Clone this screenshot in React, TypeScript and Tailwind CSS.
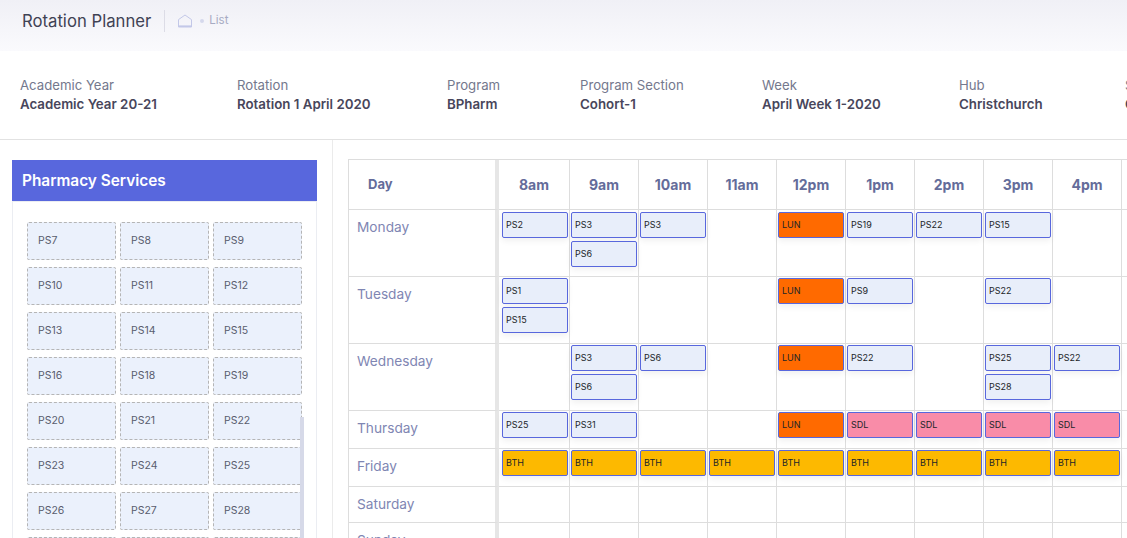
// Rotation Planner: list view with the service palette and weekly grid
import React from 'react';

type Kind = 'ps' | 'lun' | 'sdl' | 'bth';

interface Slot {
  label: string;
  kind: Kind;
}

const FILTERS = [
  { label: 'Academic Year', value: 'Academic Year 20-21', width: 'w-[217px]' },
  { label: 'Rotation', value: 'Rotation 1 April 2020', width: 'w-[210px]' },
  { label: 'Program', value: 'BPharm', width: 'w-[133px]' },
  { label: 'Program Section', value: 'Cohort-1', width: 'w-[182px]' },
  { label: 'Week', value: 'April Week 1-2020', width: 'w-[197px]' },
  { label: 'Hub', value: 'Christchurch', width: 'w-[166px]' },
  { label: 'Site', value: 'Christchurch', width: 'w-[120px]' },
];

const PALETTE = [
  'PS7', 'PS8', 'PS9', 'PS10', 'PS11', 'PS12', 'PS13', 'PS14', 'PS15', 'PS16', 'PS18', 'PS19',
  'PS20', 'PS21', 'PS22', 'PS23', 'PS24', 'PS25', 'PS26', 'PS27', 'PS28', 'PS29', 'PS30', 'PS31',
];

const HOURS = ['8am', '9am', '10am', '11am', '12pm', '1pm', '2pm', '3pm', '4pm'];

const ps = (...names: string[]): Slot[] => names.map(label => ({ label, kind: 'ps' }));
const lun: Slot[] = [{ label: 'LUN', kind: 'lun' }];
const sdl: Slot[] = [{ label: 'SDL', kind: 'sdl' }];
const bth: Slot[] = [{ label: 'BTH', kind: 'bth' }];

const ROWS: { day: string; height: string; cells: Slot[][] }[] = [
  {
    day: 'Monday',
    height: 'h-[67px]',
    cells: [ps('PS2'), ps('PS3', 'PS6'), ps('PS3'), [], lun, ps('PS19'), ps('PS22'), ps('PS15'), []],
  },
  {
    day: 'Tuesday',
    height: 'h-[67px]',
    cells: [ps('PS1', 'PS15'), [], [], [], lun, ps('PS9'), [], ps('PS22'), []],
  },
  {
    day: 'Wednesday',
    height: 'h-[67px]',
    cells: [[], ps('PS3', 'PS6'), ps('PS6'), [], lun, ps('PS22'), [], ps('PS25', 'PS28'), ps('PS22')],
  },
  {
    day: 'Thursday',
    height: 'h-[38px]',
    cells: [ps('PS25'), ps('PS31'), [], [], lun, sdl, sdl, sdl, sdl],
  },
  {
    day: 'Friday',
    height: 'h-[38px]',
    cells: [bth, bth, bth, bth, bth, bth, bth, bth, bth],
  },
  { day: 'Saturday', height: 'h-[36px]', cells: [[], [], [], [], [], [], [], [], []] },
  { day: 'Sunday', height: 'h-[38px]', cells: [[], [], [], [], [], [], [], [], []] },
];

const KIND_CLASS: Record<Kind, string> = {
  ps: 'bg-[#e8eefa]',
  lun: 'bg-[#ff6a00]',
  sdl: 'bg-[#f98ca8]',
  bth: 'bg-[#fdb900]',
};

const HomeIcon = () => (
  <svg width="16" height="14" viewBox="0 0 16 14" fill="none" className="text-[#c3c8e8]" aria-hidden="true">
    <path d="M1.5 5.6 8 1l6.5 4.6V13h-13z" stroke="currentColor" strokeWidth="1" />
    <path d="M1 12.2h14" stroke="currentColor" strokeWidth="1.6" />
  </svg>
);

const App: React.FC = () => {
  return (
    <div className="w-[1127px] h-[538px] overflow-hidden bg-white font-['Inter','Liberation_Sans',sans-serif]">
      <header className="h-[51px] flex items-center pl-[22px] pb-[9px] bg-gradient-to-b from-[#f0f0f6] to-[#fafafd]">
        <h1 className="text-[16.7px] text-[#3f4254] pr-[13px] border-r border-[#dcdce6] leading-[22px]">Rotation Planner</h1>
        <span className="ml-[12px] flex items-center">
          <HomeIcon />
        </span>
        <span className="ml-[7px] w-[4px] h-[4px] rounded-full bg-[#d5d8ec]" />
        <span className="ml-[5px] text-[11.5px] text-[#a7abc3]">List</span>
      </header>

      <section className="h-[89px] flex pl-[20px] pt-[25px] border-b border-[#e2e2e2] overflow-hidden">
        {FILTERS.map(f => (
          <div key={f.label} className={`${f.width} shrink-0`}>
            <div className="text-[13.2px] leading-[19px] text-[#74788d]">{f.label}</div>
            <div className="text-[13.3px] leading-[19px] font-semibold text-[#48465b]">{f.value}</div>
          </div>
        ))}
      </section>

      <div className="flex">
        <aside className="w-[333px] shrink-0 h-[398px] pl-[12px] pr-[15px] pt-[20px] border-r border-[#ebebeb]">
          <div className="h-[41px] flex items-center pl-[10px] bg-[#5867dd] text-white text-[15.4px] font-semibold">
            Pharmacy Services
          </div>
          <div className="relative h-[400px] overflow-hidden border-x border-t border-[#ebedf2] pl-[14px] pt-[20px]">
            <div className="grid grid-cols-[89px_89px_89px] auto-rows-[38px] gap-x-[4px] gap-y-[7px]">
              {PALETTE.map(name => (
                <div
                  key={name}
                  className="flex items-center pl-[10px] bg-[#ebf1fc] border border-dashed border-[#b5b5b5] rounded-[2px] text-[10.5px] text-[#595d6e]"
                >
                  {name}
                </div>
              ))}
            </div>
            <div className="absolute left-[287px] top-[215px] w-[4px] h-[200px] bg-[#d6d9e8]" />
          </div>
        </aside>

        <main className="flex-1 min-w-0 pl-[15px] pt-[19px] overflow-hidden">
          <div className="w-[840px] border-t border-l border-[#dddddd] grid grid-cols-[150px_71px_repeat(8,69px)_66px]">
            <div className="h-[50px] flex items-center pl-[19px] border-r-4 border-b border-r-[#e6e6e6] border-b-[#dddddd] text-[13px] font-bold text-[#646c9a]">
              Day
            </div>
            {HOURS.map(h => (
              <div
                key={h}
                className="h-[50px] flex items-center justify-center border-r border-b border-[#dddddd] text-[14px] font-bold text-[#646c9a]"
              >
                {h}
              </div>
            ))}
            <div className="h-[50px] border-r border-b border-[#dddddd]" />

            {ROWS.map((row, r) => (
              <React.Fragment key={row.day}>
                <div className={`${row.height} pl-[8px] pt-[8px] border-r-4 border-b border-r-[#e6e6e6] border-b-[#dddddd] text-[13.7px] leading-[18px] text-[#7f86b3]`}>
                  {row.day}
                </div>
                {row.cells.map((slots, i) => (
                  <div
                    key={i}
                    className={`${row.height} ${i === 0 ? 'pl-[3px]' : 'pl-[1px]'} ${r === 0 ? 'pt-[2px]' : 'pt-[1px]'} flex flex-col gap-[3px] border-r border-b border-[#dddddd]`}
                  >
                    {slots.map((slot, j) => (
                      <div
                        key={j}
                        className={`${KIND_CLASS[slot.kind]} h-[26px] w-[66px] shrink-0 pl-[3px] pt-[5px] border border-[#5867dd] rounded-[2px] shadow-[0_3px_6px_rgba(0,0,0,0.06)] text-[9px] leading-[13px] text-[#212529]`}
                      >
                        {slot.label}
                      </div>
                    ))}
                  </div>
                ))}
                <div className={`${row.height} border-r border-b border-[#dddddd]`} />
              </React.Fragment>
            ))}
          </div>
        </main>
      </div>
    </div>
  );
};

export default App;
